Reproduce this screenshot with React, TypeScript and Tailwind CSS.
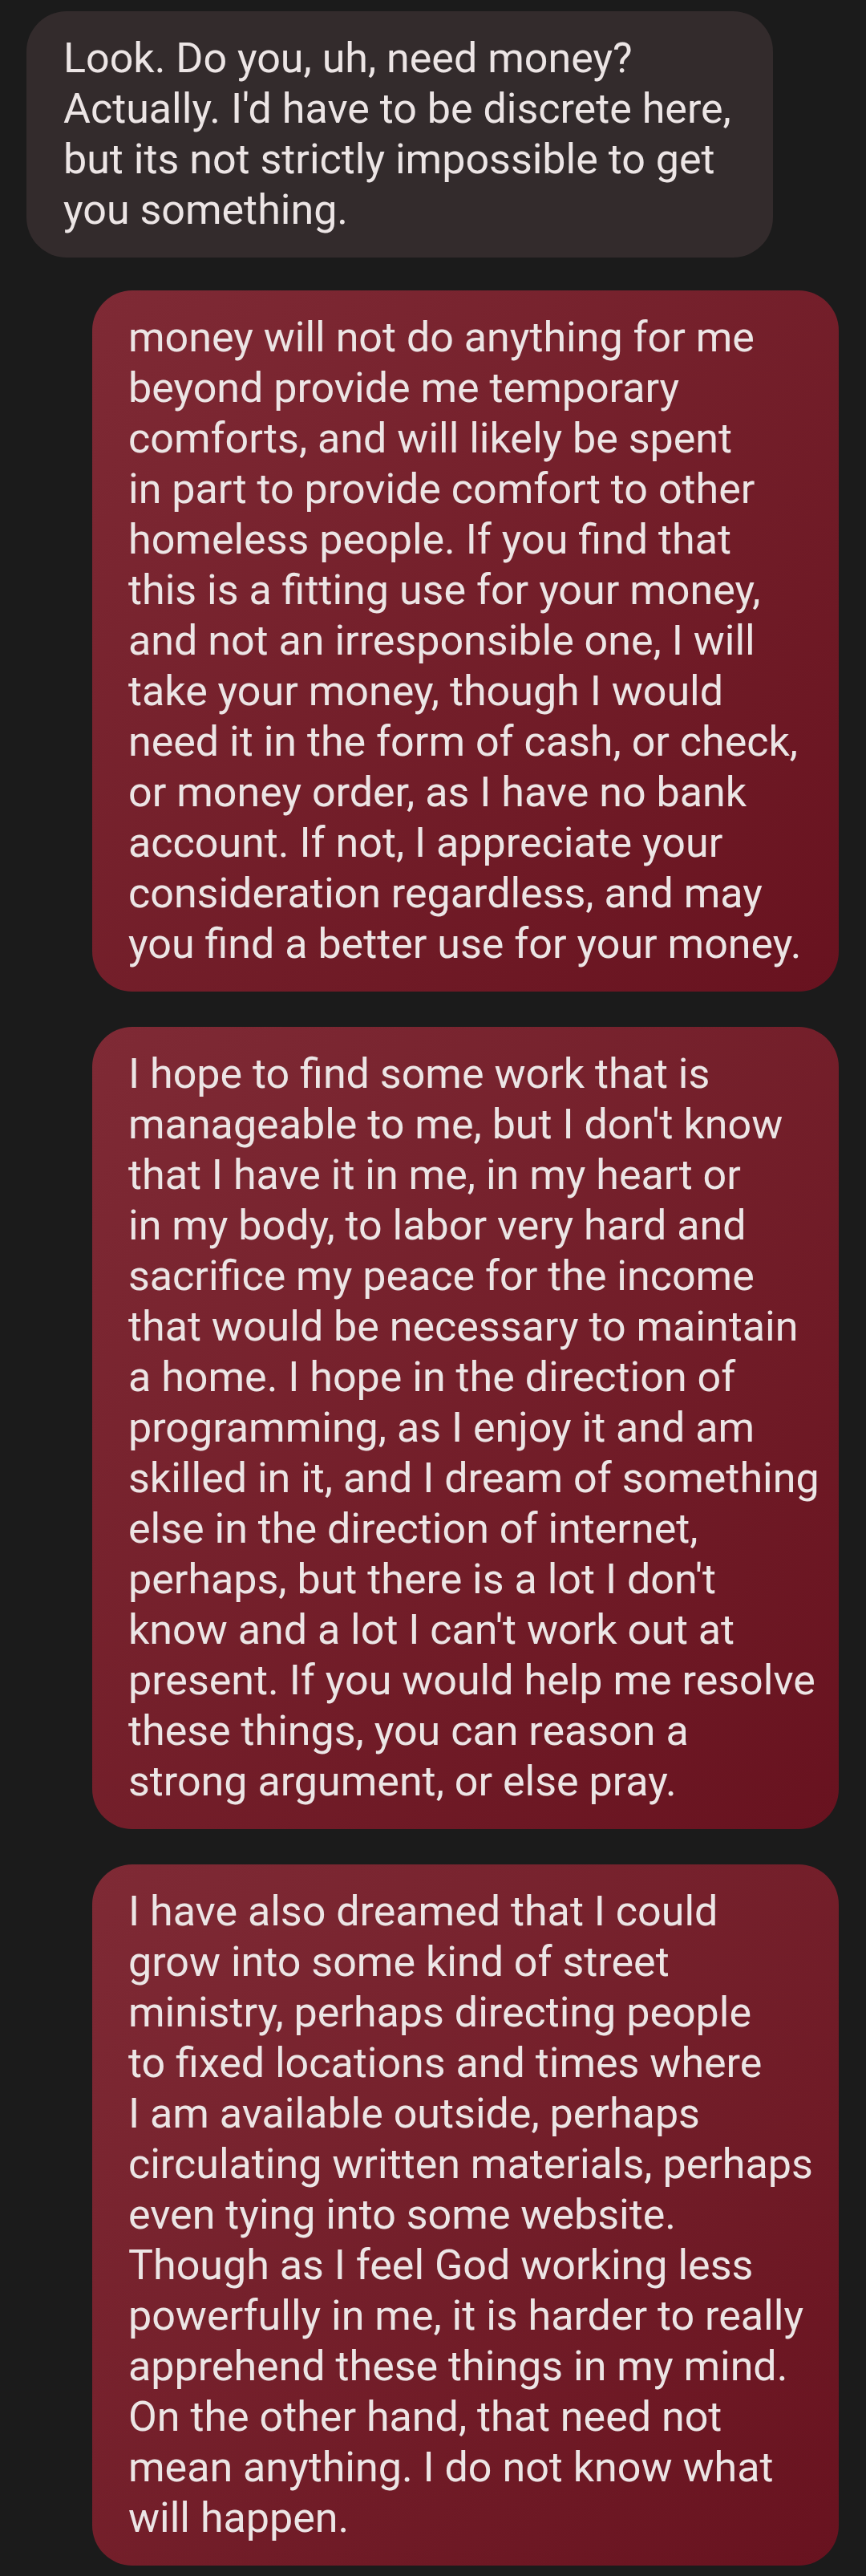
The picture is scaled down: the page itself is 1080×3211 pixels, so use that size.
const incoming = [
  "Look. Do you, uh, need money?",
  "Actually. I'd have to be discrete here,",
  "but its not strictly impossible to get",
  "you something.",
]

const outgoing = [
  [
    "money will not do anything for me",
    "beyond provide me temporary",
    "comforts, and will likely be spent",
    "in part to provide comfort to other",
    "homeless people. If you find that",
    "this is a fitting use for your money,",
    "and not an irresponsible one, I will",
    "take your money, though I would",
    "need it in the form of cash, or check,",
    "or money order, as I have no bank",
    "account. If not, I appreciate your",
    "consideration regardless, and may",
    "you find a better use for your money.",
  ],
  [
    "I hope to find some work that is",
    "manageable to me, but I don't know",
    "that I have it in me, in my heart or",
    "in my body, to labor very hard and",
    "sacrifice my peace for the income",
    "that would be necessary to maintain",
    "a home. I hope in the direction of",
    "programming, as I enjoy it and am",
    "skilled in it, and I dream of something",
    "else in the direction of internet,",
    "perhaps, but there is a lot I don't",
    "know and a lot I can't work out at",
    "present. If you would help me resolve",
    "these things, you can reason a",
    "strong argument, or else pray.",
  ],
  [
    "I have also dreamed that I could",
    "grow into some kind of street",
    "ministry, perhaps directing people",
    "to fixed locations and times where",
    "I am available outside, perhaps",
    "circulating written materials, perhaps",
    "even tying into some website.",
    "Though as I feel God working less",
    "powerfully in me, it is harder to really",
    "apprehend these things in my mind.",
    "On the other hand, that need not",
    "mean anything. I do not know what",
    "will happen.",
  ],
]

function Lines({ lines }: { lines: string[] }) {
  return (
    <>
      {lines.map((l, i) => (
        <div key={i} className="whitespace-nowrap">
          {l}
        </div>
      ))}
    </>
  )
}

export default function App() {
  return (
    <div
      className="min-h-screen bg-[#1b1b1b] pt-[14px] pb-[14px] text-[52px] leading-[63px] text-[#ece5e5]"
      style={{ fontFamily: "Roboto, 'Noto Sans', sans-serif" }}
    >
      <div className="ml-[33px] w-[931px] rounded-[50px] bg-[#332b2c] pl-[46px] pr-[30px] pt-[27px] pb-[28px]">
        <Lines lines={incoming} />
      </div>
      <div className="flex flex-col items-end gap-[44px] pt-[41px] pr-[34px]">
        {outgoing.map((msg, i) => (
          <div
            key={i}
            className="w-[931px] rounded-[50px] bg-gradient-to-br from-[#7f2a35] to-[#68121f] pl-[45px] pr-[30px] pt-[27px] pb-[28px]"
          >
            <Lines lines={msg} />
          </div>
        ))}
      </div>
    </div>
  )
}
